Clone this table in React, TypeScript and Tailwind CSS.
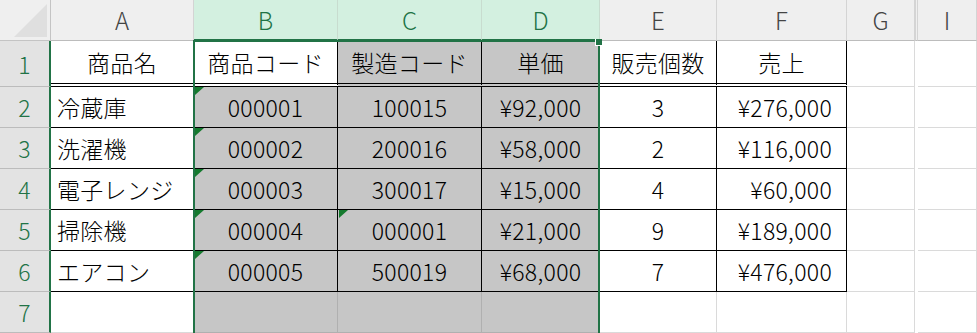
type Col = {
  key: string;
  w: string;
  sel?: boolean;
  hidden?: boolean;
  align?: string;
};

const cols: Col[] = [
  { key: 'A', w: 'w-[143px]' },
  { key: 'B', w: 'w-[144px]', sel: true, align: 'justify-center' },
  { key: 'C', w: 'w-[144px]', sel: true, align: 'justify-center' },
  { key: 'D', w: 'w-[118px]', sel: true, align: 'justify-center' },
  { key: 'E', w: 'w-[117px]', align: 'justify-center' },
  { key: 'F', w: 'w-[130px]', align: 'justify-end pr-[14px]' },
  { key: 'G', w: 'w-[68px]' },
  { key: 'H', w: 'w-[3px]', hidden: true },
  { key: 'I', w: 'flex-1' },
];

const header = ['商品名', '商品コード', '製造コード', '単価', '販売個数', '売上'];

const rows = [
  ['冷蔵庫', '000001', '100015', '¥92,000', '3', '¥276,000'],
  ['洗濯機', '000002', '200016', '¥58,000', '2', '¥116,000'],
  ['電子レンジ', '000003', '300017', '¥15,000', '4', '¥60,000'],
  ['掃除機', '000004', '000001', '¥21,000', '9', '¥189,000'],
  ['エアコン', '000005', '500019', '¥68,000', '7', '¥476,000'],
];

// cells carrying the green "number stored as text" marker
const flagged = new Set(['1-2', '1-3', '1-4', '1-5', '1-6', '2-5']);

function Flag() {
  return (
    <svg className="absolute left-[1px] top-0" width="9" height="8" viewBox="0 0 9 8">
      <polygon points="0,0 9,0 0,8" fill="#157a2e" />
    </svg>
  );
}

function ColHeader() {
  return (
    <div className="flex h-[41px]">
      <div className="relative h-full w-[51px] shrink-0 border-b border-r border-[#c4c4c4] bg-[#efefef]">
        <svg className="absolute inset-0" width="50" height="40">
          <polygon points="47,4 47,37 14,37" fill="#dfdfdf" />
        </svg>
      </div>
      {cols.map((c) =>
        c.hidden ? (
          <div key={c.key} className="h-full w-[3px] shrink-0 border-x border-b border-x-[#d4d4d4] border-b-[#bcbcbc] bg-[#efefef]" />
        ) : (
          <div
            key={c.key}
            className={`${c.w} flex h-full shrink-0 items-center justify-center overflow-hidden border-r text-[24px] font-light ${
              c.sel
                ? 'border-b-2 border-b-[#217346] border-r-[#c8dccf] bg-[#d3f0e0] text-[#217346]'
                : 'border-b border-b-[#bcbcbc] border-r-[#d4d4d4] bg-[#efefef] text-[#444]'
            }`}
          >
            {c.key}
          </div>
        ),
      )}
    </div>
  );
}

function Row({ n, data }: { n: number; data: string[] | null }) {
  const first = n === 1;
  const inTable = n <= 6;
  return (
    <div className={`flex ${first ? 'h-[46px]' : 'h-[41px]'}`}>
      <div className="flex h-full w-[51px] shrink-0 items-center justify-center border-b border-r-2 border-b-[#bcbcbc] border-r-[#217346] bg-[#e3e3e3] pt-[1px] text-[23px] font-light text-[#217346]">
        {n}
      </div>
      {cols.map((c, i) => {
        if (c.hidden) return <div key={c.key} className="h-full w-[3px] shrink-0 bg-white" />;
        const table = inTable && i <= 5;
        const active = n === 1 && c.key === 'B';
        const bg = c.sel && !active ? 'bg-[#c6c6c6]' : 'bg-white';
        let border = 'border-r border-b border-[#dadada]';
        if (table) border = first ? 'border-r border-b-4 border-double border-black' : 'border-r border-b border-black';
        else if (c.sel) border = 'border-r border-b border-[#b0b0b0]';
        let align = c.align ?? '';
        if (first) align = 'justify-center';
        else if (c.key === 'A') align = 'justify-start pl-[6px]';
        const text = data ? data[i] : first ? header[i] : '';
        return (
          <div
            key={c.key}
            className={`${c.w} ${bg} ${border} ${align} relative flex h-full shrink-0 items-center overflow-hidden whitespace-nowrap pt-[1px] text-[23px] font-light tracking-[0.3px] text-black`}
          >
            {flagged.has(`${i}-${n}`) && <Flag />}
            {text}
          </div>
        );
      })}
    </div>
  );
}

export default function App() {
  return (
    <div
      className="relative h-[333px] w-[977px] overflow-hidden bg-white"
      style={{ fontFamily: '"Noto Sans CJK JP", "Noto Sans", sans-serif' }}
    >
      <ColHeader />
      <Row n={1} data={null} />
      {rows.map((r, i) => (
        <Row key={i} n={i + 2} data={r} />
      ))}
      <Row n={7} data={['', '', '', '', '', '']} />

      {/* selection outline around B:D */}
      <div className="pointer-events-none absolute bottom-0 left-[193px] top-[40px] w-[407px] border-x-2 border-t-2 border-[#217346]" />
      <div className="absolute left-[595px] top-[39px] h-[7px] w-[7px] border-b border-l border-white bg-[#217346]" />
    </div>
  );
}
